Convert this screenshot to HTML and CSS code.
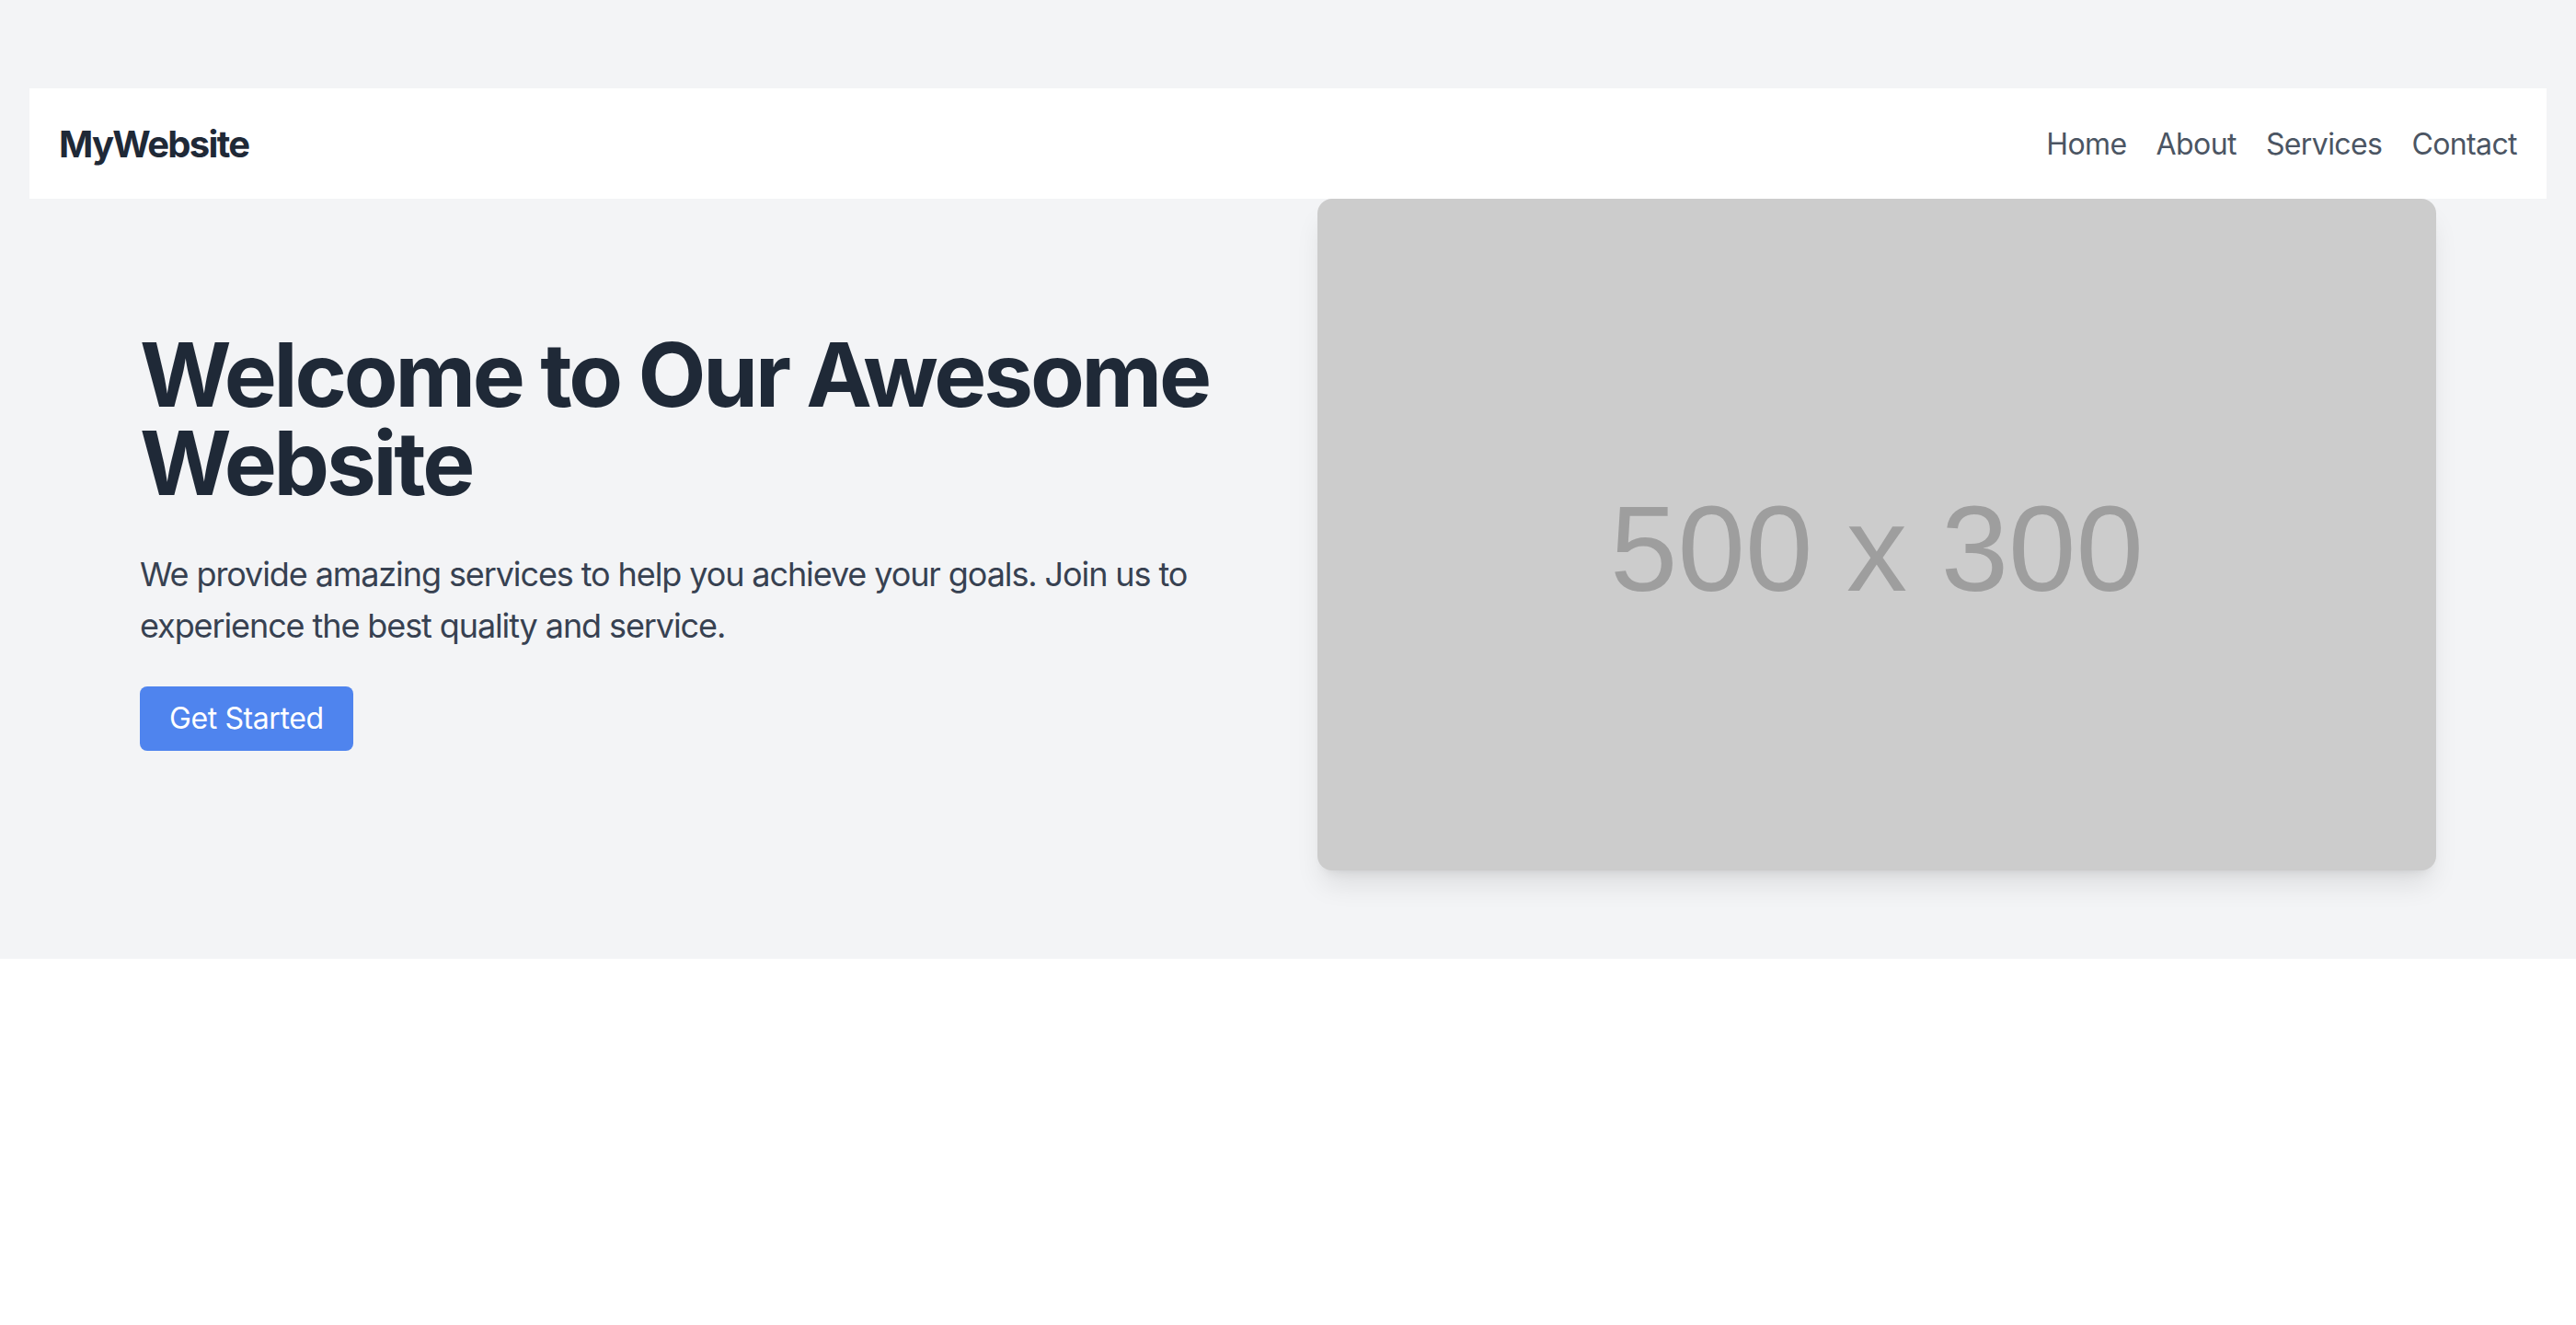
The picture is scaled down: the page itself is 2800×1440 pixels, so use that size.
FILE: index.html
```html
<!DOCTYPE html>
<html lang="en">
<head>
<meta charset="utf-8">
<title>MyWebsite</title>
<link rel="stylesheet" href="styles.css">
</head>
<body>
<section class="hero">
  <nav class="nav">
    <div class="logo">MyWebsite</div>
    <ul class="links">
      <li><a href="#">Home</a></li>
      <li><a href="#">About</a></li>
      <li><a href="#">Services</a></li>
      <li><a href="#">Contact</a></li>
    </ul>
  </nav>
  <div class="hero-body">
    <div class="hero-text">
      <h1 class="title">Welcome to Our Awesome Website</h1>
      <p class="lead">We provide amazing services to help you achieve your goals. Join us to experience the best quality and service.</p>
      <a class="btn" href="#">Get Started</a>
    </div>
    <div class="placeholder"><span class="ph-text">500 x 300</span></div>
  </div>
</section>
</body>
</html>
```
FILE: styles.css
```css
* { box-sizing: border-box; }
html, body { margin: 0; padding: 0; background: #ffffff; }
body { font-family: Inter, "Noto Sans", "Liberation Sans", sans-serif; }

.hero {
  background: #f3f4f6;
  padding: 96px 32px 96px;
}

.nav {
  background: #ffffff;
  height: 120px;
  padding: 0 32px;
  display: flex;
  align-items: center;
  justify-content: space-between;
}
.logo {
  font-size: 40px;
  font-weight: 700;
  color: #1f2937;
  letter-spacing: -1.7px;
}
.links {
  list-style: none;
  margin: 0;
  padding: 0;
  display: flex;
  gap: 32px;
}
.links a {
  font-size: 32px;
  color: #4b5563;
  text-decoration: none;
  letter-spacing: -0.6px;
}

.hero-body {
  max-width: 2560px;
  margin: 0 auto;
  padding: 0 32px;
  display: flex;
  align-items: center;
}
.hero-text {
  width: 1248px;
  flex: none;
  padding-top: 13px;
}
.title {
  margin: 0 0 45px;
  font-size: 96px;
  line-height: 96px;
  font-weight: 700;
  color: #1f2937;
  letter-spacing: -3.2px;
}
.lead {
  margin: 0 0 38px;
  font-size: 36px;
  line-height: 56px;
  color: #374151;
  letter-spacing: -1.1px;
}
.btn {
  display: inline-block;
  background: #4f84ee;
  color: #ffffff;
  font-size: 32px;
  line-height: 48px;
  padding: 11px 32px;
  border-radius: 8px;
  text-decoration: none;
  letter-spacing: -0.4px;
}

.placeholder {
  margin-left: auto;
  width: 1216px;
  height: 730px;
  flex: none;
  background: #cccccc;
  border-radius: 16px;
  box-shadow: 0 20px 30px -6px rgba(0,0,0,0.1), 0 8px 12px -8px rgba(0,0,0,0.1);
  display: flex;
  align-items: center;
  justify-content: center;
  padding-top: 30px;
}
.ph-text {
  font-family: "Liberation Sans", Arial, sans-serif;
  font-size: 132px;
  color: #9e9e9e;
  filter: blur(0.6px);
}
```
